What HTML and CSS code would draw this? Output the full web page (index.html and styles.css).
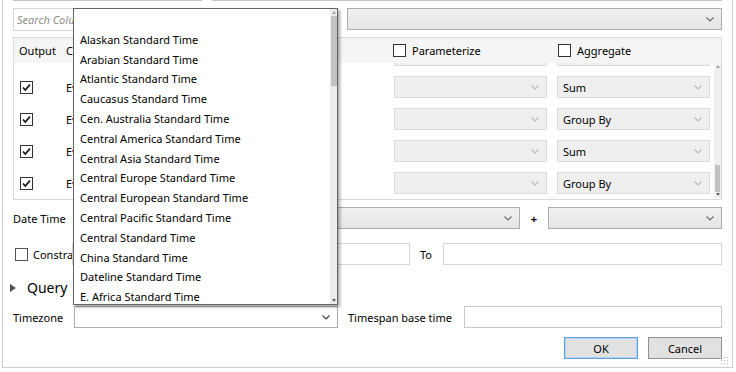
FILE: index.html
```html
<!DOCTYPE html>
<html>
<head>
  <title>Edit Query</title>
  <link rel="stylesheet" href="styles.css">
</head>
<body>
  <div class="dialog">
    <!-- controls above, scrolled out of view -->
    <div class="cut-row">
      <div class="cut cut-a"></div>
      <div class="cut cut-b"></div>
    </div>

    <div class="row search-row">
      <div class="textbox search"><span class="placeholder">Search Columns</span></div>
      <div class="combo filter"><svg class="chev" width="8" height="5"><path d="M0.5 0.5 L4 4 L7.5 0.5" /></svg></div>
    </div>

    <div class="grid">
      <div class="grid-head">
        <span class="h-out">Output</span>
        <span class="h-name">Column</span>
        <span class="h-param"><span class="box"></span>Parameterize</span>
        <span class="h-agg"><span class="box"></span>Aggregate</span>
      </div>
      <div class="grid-body">
        <div class="rows" id="rows"></div>
        <div class="vscroll">
          <span class="arr up"></span>
          <span class="track"><span class="thumb"></span></span>
          <span class="arr down"></span>
        </div>
      </div>
    </div>

    <div class="row dt-row">
      <span class="lbl w-lbl">Date Time</span>
      <div class="combo dt-a"><svg class="chev" width="8" height="5"><path d="M0.5 0.5 L4 4 L7.5 0.5" /></svg></div>
      <span class="plus">+</span>
      <div class="combo dt-b"><svg class="chev" width="8" height="5"><path d="M0.5 0.5 L4 4 L7.5 0.5" /></svg></div>
    </div>

    <div class="row cons-row">
      <span class="box cons-box"></span>
      <span class="lbl cons-lbl">Constrain</span>
      <div class="textbox cons-from"></div>
      <span class="lbl to-lbl">To</span>
      <div class="textbox cons-to"></div>
    </div>

    <div class="row query-row">
      <span class="tri"></span>
      <span class="query">Query</span>
    </div>

    <div class="row tz-row">
      <span class="lbl w-lbl">Timezone</span>
      <div class="combo tz"><svg class="chev dark" width="8" height="5"><path d="M0.5 0.5 L4 4 L7.5 0.5" /></svg></div>
      <span class="lbl base-lbl">Timespan base time</span>
      <div class="textbox base"></div>
    </div>

    <div class="row btn-row">
      <button class="btn ok">OK</button>
      <button class="btn cancel">Cancel</button>
    </div>

    <div class="grip"></div>

    <!-- open timezone dropdown -->
    <div class="popup">
      <ul class="tz-list" id="tz-list"></ul>
      <div class="pscroll">
        <span class="arr up"></span>
        <span class="track"><span class="thumb"></span></span>
        <span class="arr down"></span>
      </div>
    </div>
  </div>

  <script>
    var zones = [
      "",
      "Alaskan Standard Time",
      "Arabian Standard Time",
      "Atlantic Standard Time",
      "Caucasus Standard Time",
      "Cen. Australia Standard Time",
      "Central America Standard Time",
      "Central Asia Standard Time",
      "Central Europe Standard Time",
      "Central European Standard Time",
      "Central Pacific Standard Time",
      "Central Standard Time",
      "China Standard Time",
      "Dateline Standard Time",
      "E. Africa Standard Time"
    ];

    var rows = [
      { name: "EventId", agg: "Group By" },
      { name: "EventName", agg: "Sum" },
      { name: "EventType", agg: "Group By" },
      { name: "EventCount", agg: "Sum" },
      { name: "EventTime", agg: "Group By" }
    ];

    var chev = '<svg class="chev" width="8" height="5"><path d="M0.5 0.5 L4 4 L7.5 0.5" /></svg>';
    var check = '<svg class="check" width="13" height="13"><rect x="0.5" y="0.5" width="12" height="12" /><path d="M3 6.5 L5.3 9 L10 3.6" /></svg>';

    var list = document.getElementById('tz-list');
    for (var i = 0; i < zones.length; i++) {
      var li = document.createElement('li');
      li.textContent = zones[i];
      list.appendChild(li);
    }

    var rowBox = document.getElementById('rows');
    for (var j = 0; j < rows.length; j++) {
      var r = document.createElement('div');
      r.className = 'grid-row';
      r.innerHTML = `
        <span class="c-out">${check}</span>
        <span class="c-name">${rows[j].name}</span>
        <span class="cmb">${chev}</span>
        <span class="cmb agg"><span class="val">${rows[j].agg}</span>${chev}</span>
      `;
      rowBox.appendChild(r);
    }
  </script>
</body>
</html>
```

FILE: styles.css
```css
* {
  box-sizing: border-box;
}

body {
  margin: 0;
  background-color: #fff;
  font-family: "Noto Sans", "Segoe UI", sans-serif;
  font-size: 11px;
  color: #000;
}

.dialog {
  position: relative;
  margin-left: 2px;
  width: 731px;
  height: 368px;
  border: 1px solid #cdcdcd;
  border-top: none;
  padding: 0 10px 8px 10px;
}

.row {
  display: flex;
  align-items: center;
}

.lbl {
  white-space: nowrap;
}

/* top strip */
.cut-row {
  display: flex;
  height: 1px;
}

.cut {
  height: 1px;
  background-color: #c4c4c4;
}

.cut-a {
  width: 189px;
}

.cut-b {
  flex: 1;
  margin-left: 10px;
}

/* inputs */
.textbox {
  height: 22px;
  border: 1px solid #d5d5d5;
  background-color: #fff;
}

.combo {
  position: relative;
  height: 22px;
  border: 1px solid #acacac;
  background: linear-gradient(#f0f0f0, #e5e5e5);
}

.chev {
  position: absolute;
  right: 7px;
  top: 8px;
}

.chev path {
  fill: none;
  stroke: #6d6d6d;
  stroke-width: 1.2;
}

.chev.dark path {
  stroke: #444;
}

.search-row {
  margin-top: 7px;
  align-items: flex-start;
}

.search {
  width: 324px;
  height: 23px;
  padding: 3px 0 0 3px;
}

.placeholder {
  font-style: italic;
  color: #8c8c8c;
}

.filter {
  flex: 1;
  margin-left: 10px;
}

/* grid */
.grid {
  margin-top: 6px;
  height: 163px;
  border: 1px solid #d9d9d9;
}

.grid-head {
  display: flex;
  align-items: center;
  height: 25px;
  background-color: #f5f5f5;
  position: relative;
  z-index: 1;
}

.h-out {
  width: 52px;
  padding-left: 5px;
}

.h-name {
  width: 327px;
}

.h-param {
  width: 165px;
  display: flex;
  align-items: center;
}

.h-agg {
  display: flex;
  align-items: center;
}

.box {
  display: inline-block;
  width: 13px;
  height: 13px;
  border: 1px solid #333;
  background-color: #fff;
  margin-right: 6px;
}

.grid-body {
  display: flex;
  height: 135px;
  overflow: hidden;
}

.rows {
  flex: 1;
  margin-top: -24px;
}

.grid-row {
  display: flex;
  align-items: center;
  height: 32px;
}

.c-out {
  width: 52px;
  padding-left: 6px;
  display: flex;
}

.check rect {
  fill: #fff;
  stroke: #333;
}

.check path {
  fill: none;
  stroke: #111;
  stroke-width: 1.6;
}

.c-name {
  width: 328px;
}

.cmb {
  position: relative;
  width: 153px;
  height: 22px;
  border: 1px solid #dadada;
  background-color: #efefef;
  padding: 3px 0 0 5px;
}

.cmb .chev path {
  stroke: #bdbdbd;
}

.cmb.agg {
  margin-left: 10px;
}

.vscroll,
.pscroll {
  display: flex;
  flex-direction: column;
  width: 8px;
  background-color: #f0f0f0;
}

.vscroll {
  margin-left: 4px;
}

.vscroll .track {
  flex: 1;
  position: relative;
}

.vscroll .thumb {
  position: absolute;
  left: 1px;
  right: 1px;
  top: 95px;
  height: 27px;
  background-color: #c2c2c2;
}

.arr {
  height: 7px;
  position: relative;
}

.arr::after {
  content: "";
  position: absolute;
  left: 2px;
  top: 2px;
  border-left: 2px solid transparent;
  border-right: 2px solid transparent;
}

.arr.up::after {
  border-bottom: 3px solid #a3a3a3;
}

.arr.down::after {
  border-top: 3px solid #606060;
}

/* lower form */
.dt-row {
  margin-top: 7px;
}

.w-lbl {
  width: 61px;
}

.dt-a {
  width: 446px;
}

.plus {
  width: 28px;
  text-align: center;
  font-weight: bold;
}

.dt-b {
  flex: 1;
}

.cons-row {
  margin-top: 14px;
}

.cons-box {
  margin-left: 2px;
  margin-right: 5px;
  border-color: #555;
}

.cons-lbl {
  width: 39px;
  overflow: hidden;
}

.cons-from {
  width: 338px;
}

.to-lbl {
  width: 33px;
  padding-left: 10px;
}

.cons-to {
  flex: 1;
}

.query-row {
  margin-top: 13px;
  height: 19px;
}

.tri {
  margin-left: -3px;
  width: 0;
  height: 0;
  border-top: 4.5px solid transparent;
  border-bottom: 4.5px solid transparent;
  border-left: 6px solid #505050;
}

.query {
  margin-left: 11px;
  font-size: 14px;
}

.tz-row {
  margin-top: 9px;
}

.tz {
  width: 264px;
  background: #fff;
  border-color: #acacac;
}

.base-lbl {
  width: 126px;
  padding-left: 10px;
}

.base {
  flex: 1;
  border-color: #c8c8c8;
}

.btn-row {
  margin-top: 9px;
  justify-content: flex-end;
}

.btn {
  width: 74px;
  height: 22px;
  font-family: inherit;
  font-size: 11px;
  color: #000;
  background-color: #e1e1e1;
  border: 1px solid #adadad;
  padding: 0;
}

.btn.ok {
  border-color: #5ea2e6;
  box-shadow: inset 0 0 0 1px #b3d3f3;
  margin-right: 10px;
}

.btn.cancel {
  border-color: #8f8f8f;
}

.grip {
  position: absolute;
  right: 2px;
  bottom: 2px;
  width: 10px;
  height: 9px;
  background-image: radial-gradient(circle, #b5b5b5 0.8px, transparent 1px);
  background-size: 3px 3px;
}

/* dropdown */
.popup {
  position: absolute;
  left: 70px;
  top: 8px;
  width: 265px;
  height: 297px;
  display: flex;
  border: 1px solid #646464;
  background-color: #fff;
  box-shadow: 2px 2px 3px rgba(0, 0, 0, 0.35);
  z-index: 5;
}

.tz-list {
  flex: 1;
  list-style: none;
  margin: 0;
  padding: 1px 0 0 0;
  overflow: hidden;
}

.tz-list li {
  height: 19.8px;
  line-height: 19.8px;
  padding-left: 6px;
  white-space: nowrap;
}

.pscroll {
  width: 7px;
  background-color: #ececec;
}

.pscroll .track {
  flex: 1;
  position: relative;
}

.pscroll .thumb {
  position: absolute;
  left: 1px;
  right: 0;
  top: 0;
  height: 70px;
  background-color: #c2c2c2;
}
```
